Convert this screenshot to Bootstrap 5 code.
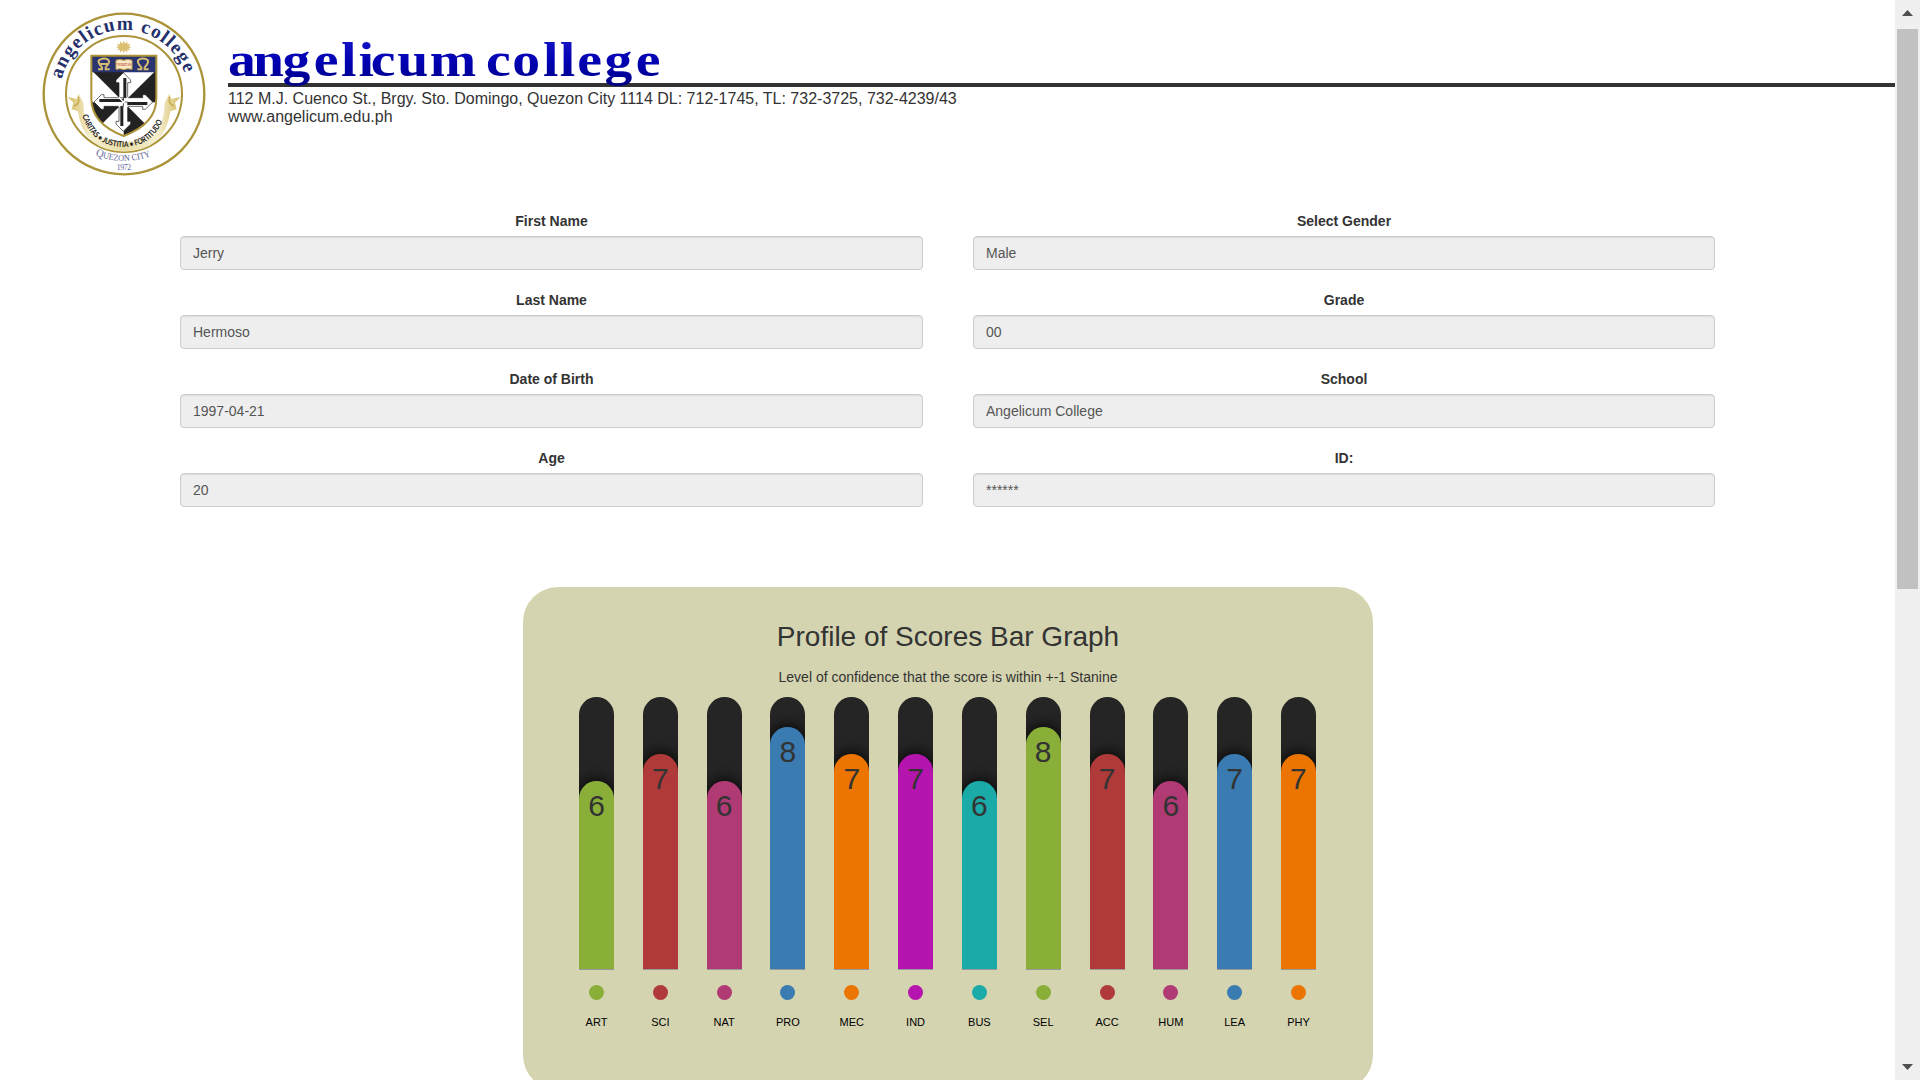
<!DOCTYPE html>
<html lang="en">
<head>
<meta charset="utf-8">
<meta name="viewport" content="width=device-width, initial-scale=1">
<title>Angelicum College - Profile of Scores</title>
<link href="https://cdn.jsdelivr.net/npm/bootstrap@5.3.0/dist/css/bootstrap.min.css" rel="stylesheet">
<style>
body{font-family:"Liberation Sans",Arial,sans-serif;font-size:14px;line-height:20px;color:#333;background:#fff}
.screen{height:1080px}
.seal{width:190px;height:190px;margin-left:30px}
.masthead{height:190px}
.brand{margin-left:8px;padding-top:30px}
.wordmark{display:block;width:460px;height:57px;margin-bottom:-4px;position:relative;z-index:1;overflow:visible}
.rule{height:4px;background:#333}
.address{font-size:16px;line-height:18px;padding-top:3px}
.profile-form{padding:21px 180px 0;column-gap:50px;row-gap:20px;display:grid;grid-template-columns:743px 742px}
.profile-form .form-label{font-weight:700;line-height:20px;margin-bottom:5px}
.profile-form .form-control{height:34px;padding:6px 12px;font-size:14px;line-height:20px;color:#555;background:#eee;border:1px solid #ccc;border-radius:4px;box-shadow:inset 0 1px 1px rgba(0,0,0,.075)}
.chart-panel{width:850px;height:503px;margin:80px 0 0 523px;border-radius:35px;background:#d4d4b0}
.chart-panel h2{font-size:28px;line-height:32px;margin:0;padding-top:34px}
.chart-note{margin:14px 0 10px}
.bars{width:737px;margin-left:56px}
.score-col{width:35px}
.track{width:35px;height:273px;border-radius:17.5px 17.5px 0 0;background:#252525;border-bottom:1px solid #999;overflow:hidden}
.fill{border-radius:17.5px 17.5px 0 0;box-shadow:0 0 15px 1px #000;font-size:30px;line-height:33px;padding-top:8px}
.dot{width:15px;height:15px;border-radius:50%;margin-top:15px}
.code{font-size:11px;line-height:16px;color:#000;margin-top:14px}
.c-green{background:#8aaf38}.c-red{background:#b03a3a}.c-rose{background:#b03a73}.c-blue{background:#3a7bb1}
.c-orange{background:#eb7500}.c-violet{background:#b514ae}.c-teal{background:#1aaba8}
.scroller{width:25px;background:#f0f0f0}
.thumb{width:21px;height:560px;margin:0 2px;background:#c1c1c1}
.scroller svg{display:block;width:25px;height:29px}
</style>
</head>
<body>
<div class="screen d-flex overflow-hidden">
<main class="flex-grow-1">
<header class="masthead d-flex">
<svg class="seal flex-shrink-0" viewBox="0 0 570 570">
<defs>
<path id="ringTop" d="M95 238A192 192 0 0 1 469 238"/>
<path id="ringBottom" d="M196 466Q282 500 368 466"/>
<path id="motto" d="M157 346Q186 441 284 441Q374 441 407 338"/>
<clipPath id="shieldClip"><path d="M184 167H379V295Q379 372 281 408Q184 372 184 295Z"/></clipPath>
<g id="crossArm"><path d="M-13 0V-58H-22V-66L0 -88L22 -66V-58H13V0Z" fill="#fff" stroke="#222" stroke-width="2"/><path d="M0 0V-72H9V0Z" fill="#222"/></g>
<linearGradient id="ribbonFill"><stop offset="0" stop-color="#d8bd68"/><stop offset=".2" stop-color="#f5efcf"/><stop offset=".5" stop-color="#e9dda6"/><stop offset=".8" stop-color="#f5efcf"/><stop offset="1" stop-color="#d8bd68"/></linearGradient>
</defs>
<circle cx="282" cy="282" r="241" fill="#fff" stroke="#ab9338" stroke-width="7"/>
<circle cx="282" cy="282" r="174" fill="#fff" stroke="#ab9338" stroke-width="6"/>
<text font-family="Liberation Serif,serif" font-weight="700" font-size="58" fill="#26306b"><textPath href="#ringTop" textLength="496">angelicum college</textPath></text>
<path d="M281 122l4 9 7-7 0 9 9-2-5 7 8 3-8 4 5 6-9-2 0 9-7-7-4 9-4-9-7 7 0-9-9 2 5-6-8-4 8-3-5-7 9 2 0-9 7 7Z" fill="#dbc071"/>
<path d="M113 291L142 297L146 281L160 310Q162 425 282 426Q404 425 404 310L418 281L422 297L451 291L435 308L440 328L421 334Q404 453 282 455Q160 453 144 334L125 328L130 308Z" fill="url(#ribbonFill)"/>
<path d="M144 290Q152 312 132 318M420 290Q412 312 432 318" fill="none" stroke="#c9ab52" stroke-width="5"/>
<g clip-path="url(#shieldClip)">
<path d="M184 167H379V410H184Z" fill="#fff"/>
<g fill="#222"><path d="M281 307V210H184Z"/><path d="M281 307L379 210V307Z"/><path d="M281 307L381 407H281Z"/><path d="M281 307L181 407V307Z"/></g>
<path d="M184 167H379V217H184Z" fill="#2a3470"/>
</g>
<use href="#crossArm" transform="translate(280 306)"/>
<use href="#crossArm" transform="translate(280 306) rotate(90)"/>
<use href="#crossArm" transform="translate(280 306) rotate(180)"/>
<use href="#crossArm" transform="translate(280 306) rotate(270)"/>
<path d="M266 292L294 320M294 292L266 320" stroke="#fff" stroke-width="4"/>
<path d="M184 167H379V295Q379 372 281 408Q184 372 184 295Z" fill="none" stroke="#ab9338" stroke-width="6"/>
<g fill="none" stroke="#d6bd72" stroke-width="6"><path d="M204 208H216V202Q199 183 210 179Q223 172 234 179Q243 185 227 202V208H239M208 192H235"/><path d="M322 208H334V202Q317 183 328 178Q339 173 350 178Q361 183 344 202V208H356"/></g>
<path d="M258 181Q270 176 281 181Q293 176 306 181V208Q293 204 281 209Q270 204 258 208Z" fill="#f6e9c4" stroke="#c5a04b" stroke-width="3"/>
<text x="261" y="199" font-family="Liberation Serif,serif" font-size="13" font-weight="700" fill="#c44434" textLength="42" lengthAdjust="spacingAndGlyphs">VERITAS</text>
<text font-family="Lato,sans-serif" font-size="24" font-weight="700" fill="#222"><textPath href="#motto" textLength="318" lengthAdjust="spacingAndGlyphs">CARITAS • JUSTITIA • FORTITUDO</textPath></text>
<text font-family="Liberation Serif,serif" font-size="27" fill="#5d6299"><textPath href="#ringBottom" textLength="170" lengthAdjust="spacingAndGlyphs"><tspan font-size="34">Q</tspan>UEZON CITY</textPath></text>
<text x="260" y="511" font-family="Liberation Serif,serif" font-size="23" fill="#5d6299" textLength="43">1972</text>
</svg>
<div class="brand flex-grow-1">
<svg class="wordmark" viewBox="0 0 460 57">
<defs><linearGradient id="inkBlue" x1="0" y1="0" x2="0" y2="1"><stop offset="0" stop-color="#1a1acb"/><stop offset=".55" stop-color="#0000b0"/><stop offset="1" stop-color="#000088"/></linearGradient></defs>
<text transform="scale(1.16 1)" y="46" x="0 21.5 47 74 97.5 112.5 123 146 174 210 222.5 245 271.5 286 301 324.5 351.5" font-family="Liberation Serif,serif" font-weight="700" font-size="48" fill="url(#inkBlue)">angelicum college</text>
</svg>
<div class="rule"></div>
<div class="address">112 M.J. Cuenco St., Brgy. Sto. Domingo, Quezon City 1114 DL: 712-1745, TL: 732-3725, 732-4239/43<br>www.angelicum.edu.ph</div>
</div>
</header>
<form class="profile-form text-center">
<div><label class="form-label d-block">First Name</label><input class="form-control" value="Jerry" disabled></div>
<div><label class="form-label d-block">Select Gender</label><input class="form-control" value="Male" disabled></div>
<div><label class="form-label d-block">Last Name</label><input class="form-control" value="Hermoso" disabled></div>
<div><label class="form-label d-block">Grade</label><input class="form-control" value="00" disabled></div>
<div><label class="form-label d-block">Date of Birth</label><input class="form-control" value="1997-04-21" disabled></div>
<div><label class="form-label d-block">School</label><input class="form-control" value="Angelicum College" disabled></div>
<div><label class="form-label d-block">Age</label><input class="form-control" value="20" disabled></div>
<div><label class="form-label d-block">ID:</label><input class="form-control" value="******" disabled></div>
</form>
<section class="chart-panel text-center">
<h2 class="fw-normal">Profile of Scores Bar Graph</h2>
<p class="chart-note">Level of confidence that the score is within +-1 Stanine</p>
<div class="bars d-flex justify-content-between" id="bars"></div>
</section>
</main>
<aside class="scroller flex-shrink-0 d-flex flex-column">
<svg viewBox="0 0 25 29"><path d="M7 16L12.5 10L18 16Z" fill="#505050"/></svg>
<div class="thumb"></div>
<svg class="mt-auto" viewBox="0 0 25 29"><path d="M7 13L12.5 19L18 13Z" fill="#505050"/></svg>
</aside>
</div>
<script src="https://cdn.jsdelivr.net/npm/bootstrap@5.3.0/dist/js/bootstrap.bundle.min.js"></script>
<script>
const scores = [["ART",6,"green"],["SCI",7,"red"],["NAT",6,"rose"],["PRO",8,"blue"],["MEC",7,"orange"],["IND",7,"violet"],["BUS",6,"teal"],["SEL",8,"green"],["ACC",7,"red"],["HUM",6,"rose"],["LEA",7,"blue"],["PHY",7,"orange"]];
document.getElementById("bars").innerHTML = scores.map(([code, score, color]) =>
  `<div class="score-col d-flex flex-column align-items-center">
    <div class="track d-flex flex-column justify-content-end"><div class="fill c-${color}" style="height:${26 + score * 27}px">${score}</div></div>
    <div class="dot c-${color}"></div><div class="code">${code}</div>
  </div>`).join("");
</script>
</body>
</html>
